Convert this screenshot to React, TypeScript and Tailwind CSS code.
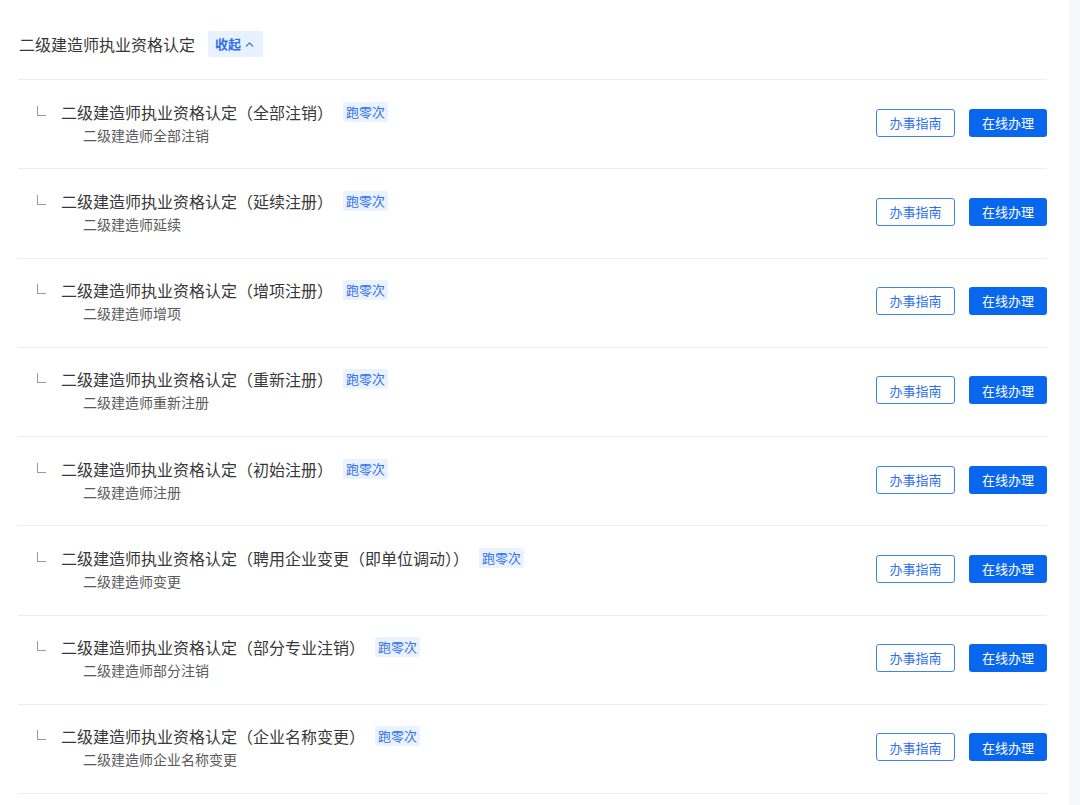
import { ChevronUp } from 'lucide-react'

type Item = {
  title: string
  sub: string
}

const items: Item[] = [
  { title: '二级建造师执业资格认定（全部注销）', sub: '二级建造师全部注销' },
  { title: '二级建造师执业资格认定（延续注册）', sub: '二级建造师延续' },
  { title: '二级建造师执业资格认定（增项注册）', sub: '二级建造师增项' },
  { title: '二级建造师执业资格认定（重新注册）', sub: '二级建造师重新注册' },
  { title: '二级建造师执业资格认定（初始注册）', sub: '二级建造师注册' },
  { title: '二级建造师执业资格认定（聘用企业变更（即单位调动））', sub: '二级建造师变更' },
  { title: '二级建造师执业资格认定（部分专业注销）', sub: '二级建造师部分注销' },
  { title: '二级建造师执业资格认定（企业名称变更）', sub: '二级建造师企业名称变更' },
]

const font = { fontFamily: '"Noto Sans CJK SC", "Liberation Sans", sans-serif' }

function Row({ item }: { item: Item }) {
  return (
    <div className="flex items-center justify-between border-b border-[#ebedf0] pt-[20.5px] pb-[23.75px] pl-[19px]">
      <div className="flex items-start">
        {/* 树形连接线 */}
        <span className="mt-[5px] mr-[15px] h-[10px] w-[9px] border-b-[1.5px] border-l-[1.5px] border-[#9a9a9a]" />
        <div className="flex flex-col">
          <div className="flex items-center">
            <span className="text-[16px] leading-[22px] text-[#383838]">{item.title}</span>
            <span className="ml-[10px] rounded-[2px] bg-[#eaf2ff] px-[3px] text-[13px] leading-[20px] text-[#2f6ff0]">
              跑零次
            </span>
          </div>
          <span className="mt-[2px] pl-[22px] text-[14px] leading-[20px] text-[#5a5a5a]">{item.sub}</span>
        </div>
      </div>
      <div className="flex items-center gap-[14px]">
        <button
          type="button"
          className="h-[28px] w-[79px] rounded-[3px] border border-[#3d84f0] bg-white text-[13px] text-[#2f6ff0]"
        >
          办事指南
        </button>
        <button type="button" className="h-[28px] w-[78px] rounded-[3px] bg-[#0967ee] text-[13px] text-white">
          在线办理
        </button>
      </div>
    </div>
  )
}

export default function App() {
  return (
    <div className="flex min-h-[805px] w-[1080px] bg-white" style={font}>
      <main className="w-[1069px] pl-[18px] pr-[22px]">
        <div className="flex items-center border-b border-[#ebedf0] pt-[31px] pb-[22px]">
          <span className="pl-[1px] text-[16px] leading-[26px] text-[#383838]">二级建造师执业资格认定</span>
          <span className="ml-[13px] flex h-[26px] items-center gap-[2px] rounded-[2px] bg-[#e8f1ff] px-[7px] text-[13px] font-bold text-[#2f6ff0]">
            收起
            <ChevronUp size={13} strokeWidth={2.2} />
          </span>
        </div>
        {items.map((item) => (
          <Row key={item.title} item={item} />
        ))}
      </main>
      <div className="w-[11px] bg-[#f7f8fa]" />
    </div>
  )
}
